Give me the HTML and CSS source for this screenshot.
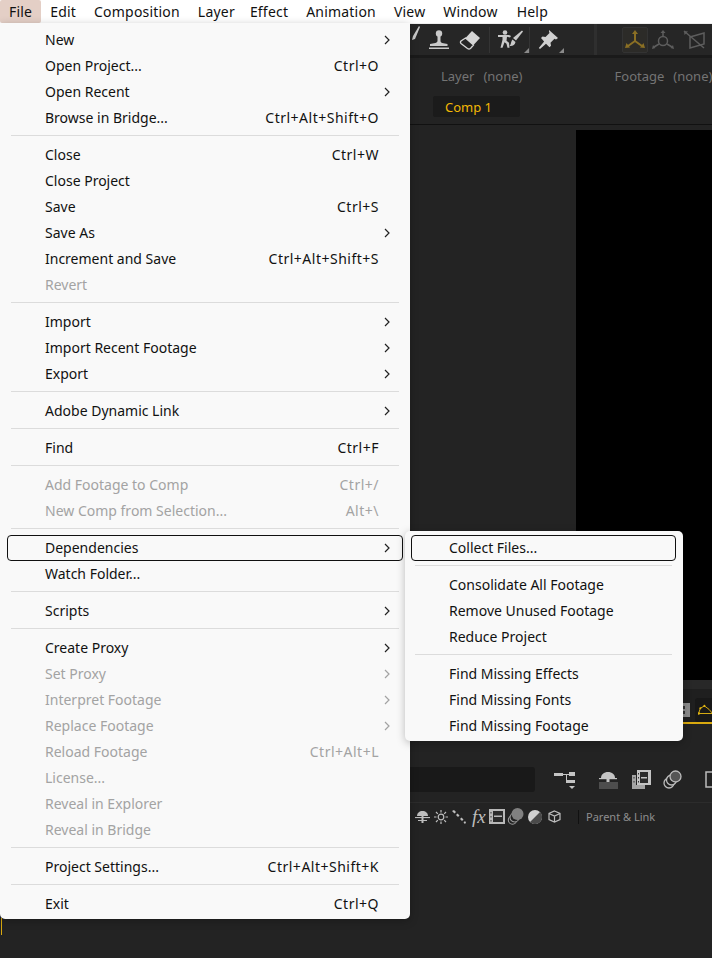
FILE: index.html
```html
<!DOCTYPE html>
<html lang="en">

<head>
  <meta charset="UTF-8">
  <meta name="viewport" content="width=device-width, initial-scale=1.0">
  <title>After Effects - File menu</title>
  <link rel="stylesheet" href="styles.css">
</head>

<body>

  <svg class="defs" width="0" height="0">
    <symbol id="chev" viewBox="0 0 7 12">
      <path d="M1 2l4 4-4 4" fill="none" stroke="currentColor" stroke-width="1.200" />
    </symbol>
  </svg>

  <header class="menubar">
    <span class="top-item active">File</span>
    <span class="top-item">Edit</span>
    <span class="top-item">Composition</span>
    <span class="top-item layer-item">Layer</span>
    <span class="top-item">Effect</span>
    <span class="top-item">Animation</span>
    <span class="top-item">View</span>
    <span class="top-item window-item">Window</span>
    <span class="top-item">Help</span>
  </header>

  <div class="toolbar">
    <svg class="tool brush-tip" width="8" height="14" viewBox="0 0 8 14"><path d="M7 0L8 1 3 13 0 14 1 10z" fill="#c9c9c9" /></svg>
    <svg class="tool stamp" width="22" height="20" viewBox="0 0 22 20" fill="#c9c9c9">
      <circle cx="11" cy="3.500" r="3.200" />
      <path d="M9.500 6h3v5c0 1 1 2 3 2.300l4 .7v2H2v-2l4-.7c2-.3 3.500-1.300 3.500-2.300z" />
      <rect x="1" y="17.500" width="20" height="1.500" />
    </svg>
    <svg class="tool eraser" width="22" height="20" viewBox="0 0 22 20">
      <path d="M13 1l8 7-6.500 7-8-7z" fill="#d6d6d6" />
      <path d="M6.500 8l8 7-3 3.500c-1 .7-2 .7-3 0L2 13.500c-.7-.8-.7-1.700 0-2.500z" fill="none" stroke="#d6d6d6" stroke-width="1.300" />
    </svg>
    <i class="tool-sep"></i>
    <span class="tool tool-corner">
      <svg width="25" height="20" viewBox="0 0 25 20" fill="#c9c9c9">
        <circle cx="7" cy="2.500" r="2.300" />
        <path d="M0 5h11l2 1-1 1.500-3-.7-.5 4 2.500 2 .5 5h-2l-1-4-2-1.500-2 5.500H2.500l2-8V7H0z" />
        <path d="M24 .5l1 1-7 9-3-2.500z" />
        <path d="M14.500 9.500l3 2.500c-.5 3-3 4.500-6 4 1.500-1 1.500-5 3-6.500z" />
      </svg>
    </span>
    <i class="tool-sep tight"></i>
    <span class="tool tool-corner">
      <svg width="20" height="20" viewBox="0 0 20 20" fill="#d0d0d0">
        <path d="M11 0l9 8-2 1.500-1.500-.8-4 4 .5 3-1.500 1.500-3.500-3.500L2 19 .8 18l5.300-6.500L3 8l1.500-1.500 3 .5 4-4L11 1.500z" />
      </svg>
    </span>
    <i class="tool-sep wide"></i>
    <span class="axis-btn">
      <svg width="22" height="20" viewBox="0 0 22 20" fill="none" stroke="#8a6f24" stroke-width="2">
        <path d="M11 11V3M11 11l-7 5M11 11l7 5" />
        <path d="M8 4l3-4 3 4zM1 18l1.500-5 3.500 4.500zM21 18l-1.500-5-3.500 4.500z" fill="#8a6f24" stroke="none" />
      </svg>
    </span>
    <svg class="tool axis-two" width="24" height="20" viewBox="0 0 24 20" fill="none" stroke="#5d5d5d" stroke-width="1.500">
      <circle cx="12" cy="11" r="4.500" />
      <path d="M12 6V2M8 14l-5 3M16 14l5 3" />
      <path d="M9.500 3L12 0l2.500 3zM1 19l1-4 2.500 3zM23 19l-1-4-2.500 3z" fill="#5d5d5d" stroke="none" />
    </svg>
    <svg class="tool axis-three" width="24" height="20" viewBox="0 0 24 20" fill="none" stroke="#5d5d5d" stroke-width="1.500">
      <path d="M7 7l14-4v11l-14 4zM1 1l20 17" />
      <path d="M1 1l4 .5L1.500 5z" fill="#5d5d5d" stroke="none" />
    </svg>
  </div>

  <div class="band"></div>

  <section class="viewer-panel">
    <div class="panel-tabs">
      <span class="panel-tab"><span>Layer</span><span>(none)</span></span>
      <span class="panel-tab"><span>Footage</span><span>(none)</span></span>
    </div>
    <div class="comp-row">
      <span class="comp-tab">Comp 1</span>
    </div>
    <div class="viewer">
      <div class="canvas"></div>
    </div>
    <div class="viewer-foot">
      <svg class="grid-btn" width="10" height="14" viewBox="0 0 10 14">
        <rect x="0" y="0" width="10" height="14" fill="#8a8a8a" />
        <rect x="2" y="3" width="3" height="3" fill="#333" />
        <rect x="2" y="8" width="3" height="3" fill="#333" />
      </svg>
      <span class="mask-btn">
        <svg width="24" height="18" viewBox="0 0 24 18" fill="none" stroke="#e3b612" stroke-width="1.600">
          <path d="M1 15L4 6l7-4 8 6 6 7z" />
          <g fill="#e3b612" stroke="none">
            <circle cx="1.500" cy="15" r="2" />
            <circle cx="4" cy="6" r="1.800" />
            <circle cx="11" cy="2" r="1.800" />
          </g>
        </svg>
      </span>
    </div>
  </section>

  <section class="timeline">
    <div class="timeline-tools">
      <div class="search-box"></div>
      <svg class="tl-icon tree" width="24" height="20" viewBox="0 0 24 20" fill="#c4c4c4">
        <rect x="0" y="3" width="9" height="3" />
        <rect x="9" y="4" width="10" height="1" />
        <rect x="12" y="4" width="1" height="9" />
        <rect x="15" y="2" width="6" height="4" />
        <rect x="12" y="10" width="9" height="3" />
        <path d="M15 16h6l-3 3z" />
      </svg>
      <svg class="tl-icon shy" width="20" height="18" viewBox="0 0 20 18" fill="#c4c4c4">
        <path d="M3 7c0-3.500 3-6 7-6s7 2.500 7 6z" />
        <rect x="1" y="7" width="18" height="1.200" />
        <rect x="8.500" y="5" width="3" height="7" />
        <rect x="1" y="11" width="19" height="7" fill="#4d4d4d" />
      </svg>
      <svg class="tl-icon blend" width="19" height="19" viewBox="0 0 19 19">
        <path d="M0 5h4v10h9v4H0z" fill="#a4a4a4" />
        <rect x="1.500" y="7" width="1" height="1.500" fill="#333" />
        <rect x="1.500" y="11" width="1" height="1.500" fill="#333" />
        <rect x="5" y="0" width="14" height="15" fill="#c4c4c4" />
        <rect x="8" y="2" width="8" height="11" fill="#2c2c2c" />
        <rect x="9" y="7" width="6" height="1.500" fill="#c4c4c4" />
        <rect x="6" y="3" width="1" height="1.500" fill="#333" />
        <rect x="6" y="7" width="1" height="1.500" fill="#333" />
        <rect x="6" y="11" width="1" height="1.500" fill="#333" />
      </svg>
      <svg class="tl-icon blur" width="19" height="19" viewBox="0 0 19 19" fill="none" stroke="#bcbcbc" stroke-width="1.300">
        <circle cx="6" cy="13" r="5" />
        <circle cx="8.500" cy="10" r="5" fill="#222" />
        <circle cx="12.500" cy="6.500" r="5.500" fill="#555" />
      </svg>
      <svg class="tl-icon graph" width="14" height="19" viewBox="0 0 14 19" fill="none" stroke="#bcbcbc" stroke-width="1.500">
        <rect x="1" y="2" width="12" height="15" />
      </svg>
    </div>

    <div class="col-head">
      <div class="col-icons">
        <svg width="15" height="13" viewBox="0 0 15 13" fill="#bdbdbd">
          <path d="M2 6c0-3 2.500-5 5.500-5S13 3 13 6z" />
          <rect x="0" y="7" width="15" height="1.100" />
          <rect x="6.500" y="5" width="2" height="8" />
          <rect x="3" y="10" width="9" height="1" />
        </svg>
        <svg width="14" height="14" viewBox="0 0 14 14" fill="none" stroke="#bdbdbd" stroke-width="1.200">
          <circle cx="7" cy="7" r="2.800" />
          <path d="M7 0v2.500M7 11.500V14M0 7h2.500M11.500 7H14M2 2l1.800 1.800M10.200 10.200L12 12M12 2l-1.800 1.800M3.800 10.200L2 12" />
        </svg>
        <svg width="14" height="14" viewBox="0 0 14 14" fill="#bdbdbd">
          <path d="M0 1l2-1 2 2-1.500 1.500zM4 5l1.500-1.500 2 2L6 7zM8 9l1.500-1.500 2 2L10 11zM11.500 12.500L13 11l1 1.500-1 1.500z" />
        </svg>
        <span class="fx">fx</span>
        <svg width="16" height="15" viewBox="0 0 16 15">
          <rect x="0" y="0" width="16" height="15" fill="#b8b8b8" />
          <rect x="4" y="2" width="10" height="11" fill="#2b2b2b" />
          <rect x="5" y="6.500" width="8" height="1.500" fill="#b8b8b8" />
          <rect x="1.500" y="3" width="1" height="1.500" fill="#333" />
          <rect x="1.500" y="7" width="1" height="1.500" fill="#333" />
          <rect x="1.500" y="11" width="1" height="1.500" fill="#333" />
        </svg>
        <svg class="circles" width="17" height="17" viewBox="0 0 16 17" fill="none" stroke="#9d9d9d" stroke-width="1.100">
          <circle cx="5" cy="12" r="4.200" />
          <circle cx="7" cy="9.500" r="4.500" fill="#232323" />
          <circle cx="10" cy="6" r="6" fill="#808080" stroke="none" />
        </svg>
        <svg width="14" height="14" viewBox="0 0 14 14">
          <circle cx="7" cy="7" r="7" fill="#d0d0d0" />
          <path d="M2 12L12 2a7 7 0 0 1-10 10z" fill="#4a4a4a" />
        </svg>
        <svg class="cube" width="13" height="13" viewBox="0 0 13 13" fill="none" stroke="#bdbdbd" stroke-width="1.200">
          <path d="M6.500 1l5.500 2.500v6L6.500 12 1 9.500v-6zM1 3.500L6.500 6 12 3.500M6.500 6v6" />
        </svg>
      </div>
      <i class="col-sep"></i>
      <span class="col-label">Parent &amp; Link</span>
    </div>

    <div class="tracks"></div>
  </section>

  <nav class="menu file-menu">
    <div class="row"><span class="label">New</span><svg class="chev"><use href="#chev" /></svg></div>
    <div class="row"><span class="label">Open Project...</span><span class="key">Ctrl+O</span></div>
    <div class="row"><span class="label">Open Recent</span><svg class="chev"><use href="#chev" /></svg></div>
    <div class="row"><span class="label">Browse in Bridge...</span><span class="key">Ctrl+Alt+Shift+O</span></div>
    <hr>
    <div class="row"><span class="label">Close</span><span class="key">Ctrl+W</span></div>
    <div class="row"><span class="label">Close Project</span></div>
    <div class="row"><span class="label">Save</span><span class="key">Ctrl+S</span></div>
    <div class="row"><span class="label">Save As</span><svg class="chev"><use href="#chev" /></svg></div>
    <div class="row"><span class="label">Increment and Save</span><span class="key">Ctrl+Alt+Shift+S</span></div>
    <div class="row off"><span class="label">Revert</span></div>
    <hr>
    <div class="row"><span class="label">Import</span><svg class="chev"><use href="#chev" /></svg></div>
    <div class="row"><span class="label">Import Recent Footage</span><svg class="chev"><use href="#chev" /></svg></div>
    <div class="row"><span class="label">Export</span><svg class="chev"><use href="#chev" /></svg></div>
    <hr>
    <div class="row"><span class="label">Adobe Dynamic Link</span><svg class="chev"><use href="#chev" /></svg></div>
    <hr>
    <div class="row"><span class="label">Find</span><span class="key">Ctrl+F</span></div>
    <hr>
    <div class="row off"><span class="label">Add Footage to Comp</span><span class="key">Ctrl+/</span></div>
    <div class="row off"><span class="label">New Comp from Selection...</span><span class="key">Alt+\</span></div>
    <hr>
    <div class="row focus"><span class="label">Dependencies</span><svg class="chev"><use href="#chev" /></svg></div>
    <div class="row"><span class="label">Watch Folder...</span></div>
    <hr>
    <div class="row"><span class="label">Scripts</span><svg class="chev"><use href="#chev" /></svg></div>
    <hr>
    <div class="row"><span class="label">Create Proxy</span><svg class="chev"><use href="#chev" /></svg></div>
    <div class="row off"><span class="label">Set Proxy</span><svg class="chev"><use href="#chev" /></svg></div>
    <div class="row off"><span class="label">Interpret Footage</span><svg class="chev"><use href="#chev" /></svg></div>
    <div class="row off"><span class="label">Replace Footage</span><svg class="chev"><use href="#chev" /></svg></div>
    <div class="row off"><span class="label">Reload Footage</span><span class="key">Ctrl+Alt+L</span></div>
    <div class="row off"><span class="label">License...</span></div>
    <div class="row off"><span class="label">Reveal in Explorer</span></div>
    <div class="row off"><span class="label">Reveal in Bridge</span></div>
    <hr>
    <div class="row"><span class="label">Project Settings...</span><span class="key">Ctrl+Alt+Shift+K</span></div>
    <hr>
    <div class="row"><span class="label">Exit</span><span class="key">Ctrl+Q</span></div>
  </nav>

  <nav class="menu sub-menu">
    <div class="row focus"><span class="label">Collect Files...</span></div>
    <hr>
    <div class="row"><span class="label">Consolidate All Footage</span></div>
    <div class="row"><span class="label">Remove Unused Footage</span></div>
    <div class="row"><span class="label">Reduce Project</span></div>
    <hr>
    <div class="row"><span class="label">Find Missing Effects</span></div>
    <div class="row"><span class="label">Find Missing Fonts</span></div>
    <div class="row"><span class="label">Find Missing Footage</span></div>
  </nav>

</body>
</html>
```

FILE: styles.css
```css
* {
  box-sizing: border-box;
}

html,
body {
  height: 100%;
}

body {
  margin: 0;
  width: 712px;
  height: 958px;
  overflow: hidden;
  position: relative;
  display: flex;
  flex-direction: column;
  background-color: #232323;
  font-family: 'Noto Sans', 'Open Sans', sans-serif;
  font-size: 14px;
  color: #111;
}

.defs {
  position: absolute;
}

/* top menu bar */
.menubar {
  height: 24px;
  flex: none;
  display: flex;
  background-color: #fff;
  border-bottom: 1px solid #efefef;
}

.top-item {
  height: 23px;
  line-height: 23px;
  padding: 0 9px;
  border-radius: 2px;
  letter-spacing: 0.2px;
}

.top-item.active {
  background-color: #e4cfc6;
}

.layer-item {
  margin-right: -3px;
}

.window-item {
  margin-right: 1px;
}

/* tools row */
.toolbar {
  height: 31px;
  flex: none;
  display: flex;
  align-items: center;
  padding-left: 412px;
  background-color: #262626;
}

.tool {
  flex: none;
  display: block;
}

.brush-tip {
  margin: 0 0 14px 0;
}

.stamp {
  margin-left: 8px;
}

.eraser {
  margin-left: 9px;
}

.tool-sep {
  flex: none;
  width: 1px;
  height: 26px;
  margin: 0 8px;
  background-color: #343434;
}

.tool-sep.tight {
  margin-left: 6px;
}

.tool-sep.wide {
  width: 3px;
  height: 31px;
  margin: 0 25px 0 36px;
  background-color: #2f2f2f;
}

.tool-corner {
  position: relative;
  height: 20px;
}

.tool-corner::after {
  content: '';
  position: absolute;
  right: -6px;
  bottom: -3px;
  border-style: solid;
  border-width: 0 0 5px 5px;
  border-color: transparent transparent #8a8a8a transparent;
}

.axis-btn {
  flex: none;
  width: 26px;
  height: 26px;
  display: flex;
  align-items: center;
  justify-content: center;
  background-color: #2c2b28;
  border: 1px solid #333;
  border-radius: 2px;
}

.axis-two {
  margin-left: 3px;
}

.axis-three {
  margin-left: 8px;
}

.band {
  height: 3px;
  flex: none;
  background-color: #1a1a1a;
}

/* composition viewer */
.viewer-panel {
  flex: none;
  background-color: #232323;
}

.panel-tabs {
  height: 38px;
  padding: 0 0 2px 441px;
  display: flex;
  align-items: center;
  gap: 92px;
  font-size: 13px;
  color: #747474;
}

.panel-tab {
  display: flex;
  gap: 9px;
  white-space: nowrap;
}

.comp-row {
  height: 29px;
  padding-left: 433px;
  border-bottom: 1px solid #111;
}

.comp-tab {
  display: block;
  width: 87px;
  height: 21px;
  line-height: 22px;
  padding-left: 12px;
  background-color: #1b1b1b;
  border-radius: 2px;
  font-size: 13px;
  color: #f2b705;
}

.viewer {
  height: 555px;
  padding: 5px 0 0 576px;
}

.canvas {
  height: 100%;
  background-color: #000;
}

.viewer-foot {
  height: 44px;
  padding-top: 9px;
  display: flex;
  align-items: center;
  justify-content: flex-end;
  gap: 5px;
  background-color: #1f1f1f;
  border-top: 9px solid #282828;
  border-bottom: 2px solid #d9a90f;
}

.grid-btn {
  flex: none;
}

.mask-btn {
  flex: none;
  width: 17px;
  height: 24px;
  overflow: hidden;
  display: flex;
  align-items: center;
  padding-left: 3px;
  background-color: #181818;
  border-radius: 3px 0 0 3px;
}

/* timeline */
.timeline {
  flex: 1;
  display: flex;
  flex-direction: column;
  background-color: #232323;
}

.timeline-tools {
  height: 78px;
  flex: none;
  padding-top: 43px;
  display: flex;
  align-items: flex-start;
}

.search-box {
  flex: none;
  width: 535px;
  height: 25px;
  background-color: #191919;
  border-radius: 0 3px 3px 0;
  margin-right: 19px;
}

.tl-icon {
  flex: none;
  margin-top: 3px;
}

.shy {
  margin-left: 20px;
  margin-top: 4px;
}

.blend {
  margin-left: 14px;
}

.blur {
  margin-left: 12px;
}

.graph {
  margin-left: 23px;
}

.col-head {
  height: 28px;
  flex: none;
  display: flex;
  align-items: center;
  padding-left: 415px;
  border-top: 1px solid #2c2c2c;
}

.col-icons {
  display: flex;
  align-items: center;
  gap: 4px;
}

.col-icons svg {
  flex: none;
  display: block;
}

.fx {
  flex: none;
  width: 13px;
  margin: 0 0 0 2px;
  font-family: 'Liberation Serif', serif;
  font-style: italic;
  font-size: 19px;
  line-height: 20px;
  color: #bdbdbd;
}

.col-icons .circles {
  margin-left: -2px;
}

.col-icons .cube {
  margin-left: 2px;
}

.col-sep {
  flex: none;
  width: 1px;
  height: 14px;
  margin: 0 7px 0 17px;
  background-color: #111;
}

.col-label {
  font-size: 11px;
  color: #8e8e8e;
  white-space: nowrap;
}

.tracks {
  flex: 1;
  position: relative;
}

.tracks::before {
  content: '';
  position: absolute;
  left: 1px;
  top: 88px;
  width: 1px;
  height: 17px;
  background-color: #d9a90f;
}

/* dropdown menus */
.menu {
  position: absolute;
  background-color: #f9f9f9;
  border-radius: 0 0 5px 5px;
  box-shadow: 0 2px 8px rgba(0, 0, 0, 0.25);
}

.file-menu {
  left: 0;
  top: 23px;
  width: 410px;
  padding: 4px 7px 2px;
}

.sub-menu {
  left: 405px;
  top: 531px;
  width: 278px;
  padding: 4px 7px 2px 6px;
  border-radius: 5px;
}

.row {
  height: 26px;
  padding-left: 38px;
  padding-bottom: 2px;
  display: flex;
  align-items: center;
  white-space: nowrap;
  border-radius: 4px;
  position: relative;
}

.label {
  flex: 1;
}

.key {
  margin-right: 24px;
  letter-spacing: 0.5px;
}

.chev {
  position: absolute;
  left: 377px;
  top: 7px;
  width: 7px;
  height: 12px;
  color: #222;
}

.row.off {
  color: #a3a3a3;
}

.row.off .chev {
  color: #a3a3a3;
}

.row.focus {
  border: 1px solid #111;
  padding-left: 37px;
  padding-bottom: 1px;
}

.row.focus .chev {
  left: 376px;
  top: 6px;
}

hr {
  height: 1px;
  margin: 4px 4px 6px;
  border: 0;
  background-color: #dcdcdc;
}
```
